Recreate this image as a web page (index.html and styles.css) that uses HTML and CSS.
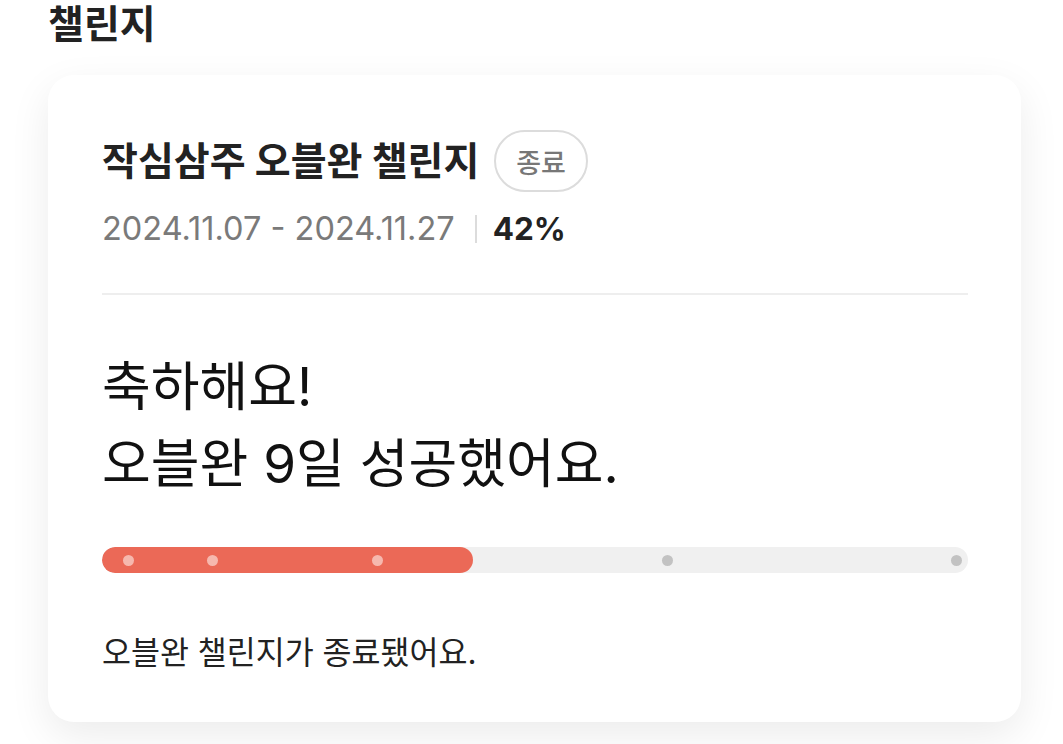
FILE: index.html
```html
<!DOCTYPE html>
<html lang="ko">
<head>
<meta charset="utf-8">
<link rel="stylesheet" href="styles.css">
</head>
<body>
<main class="page">
  <h1 class="page-title">챌린지</h1>
  <section class="card">
    <div class="card-head">
      <div class="title-row">
        <h2 class="challenge-title">작심삼주 오블완 챌린지</h2>
        <span class="badge">종료</span>
      </div>
      <div class="meta-row">
        <span class="period">2024.11.07 - 2024.11.27</span>
        <span class="sep"></span>
        <span class="rate">42%</span>
      </div>
    </div>
    <div class="divider"></div>
    <p class="message">축하해요!<br>오블완 9일 성공했어요.</p>
    <div class="progress">
      <div class="progress-fill" style="width: 42.8%"></div>
      <span class="dot done" style="left: 26px"></span>
      <span class="dot done" style="left: 110px"></span>
      <span class="dot done" style="left: 275px"></span>
      <span class="dot" style="left: 565px"></span>
      <span class="dot" style="left: 854px"></span>
    </div>
    <p class="footnote">오블완 챌린지가 종료됐어요.</p>
  </section>
</main>
</body>
</html>
```

FILE: styles.css
```css
* { box-sizing: border-box; }
html, body { margin: 0; padding: 0; background: #ffffff; }
body {
  font-family: Inter, "Noto Sans CJK KR", sans-serif;
  color: #1f1f1f;
  overflow: hidden;
}
.page {
  padding: 0 42px 22px 48px;
}
.page-title {
  margin: -6px 0 0 0;
  font-size: 39px;
  font-weight: 700;
  line-height: 60px;
  color: #222;
}
.card {
  margin-top: 21px;
  width: 973px;
  height: 647px;
  background: #fff;
  border-radius: 26px;
  box-shadow: 0 14px 40px rgba(0, 0, 0, 0.08);
  padding: 54px 53px 0 54px;
  display: flex;
  flex-direction: column;
}
.title-row {
  display: flex;
  align-items: center;
  gap: 15px;
}
.challenge-title {
  margin: 0;
  font-size: 39px;
  font-weight: 700;
  line-height: 64px;
  color: #222;
}
.badge {
  display: inline-flex;
  align-items: center;
  justify-content: center;
  height: 62px;
  padding: 0 20px;
  border: 2px solid #dcdcdc;
  border-radius: 31px;
  font-size: 27px;
  font-weight: 500;
  color: #777;
}
.meta-row {
  display: flex;
  align-items: center;
  margin-top: 14px;
  font-size: 32.5px;
  line-height: 44px;
}
.period {
  color: #7a7a7a;
}
.sep {
  width: 2px;
  height: 28px;
  background: #dcdcdc;
  margin: 0 16px 0 20px;
}
.rate {
  font-weight: 700;
  font-size: 31.5px;
  color: #222;
}
.divider {
  height: 2px;
  background: #eeeeee;
  margin-top: 42px;
}
.message {
  margin: 54px 0 0 0;
  font-size: 53px;
  line-height: 77px;
  font-weight: 400;
  color: #111;
}
.progress {
  position: relative;
  height: 26px;
  margin-top: 44px;
  border-radius: 13px;
  background: #f0f0f0;
  overflow: hidden;
}
.progress-fill {
  height: 100%;
  border-radius: 13px;
  background: #eb6957;
}
.dot {
  position: absolute;
  top: 50%;
  width: 11px;
  height: 11px;
  margin: -5.5px 0 0 -5.5px;
  border-radius: 50%;
  background: #c2c2c2;
}
.dot.done {
  background: #f6b8ae;
}
.footnote {
  margin: 60px 0 0 0;
  font-size: 31.5px;
  line-height: 40px;
  color: #222;
}
```
